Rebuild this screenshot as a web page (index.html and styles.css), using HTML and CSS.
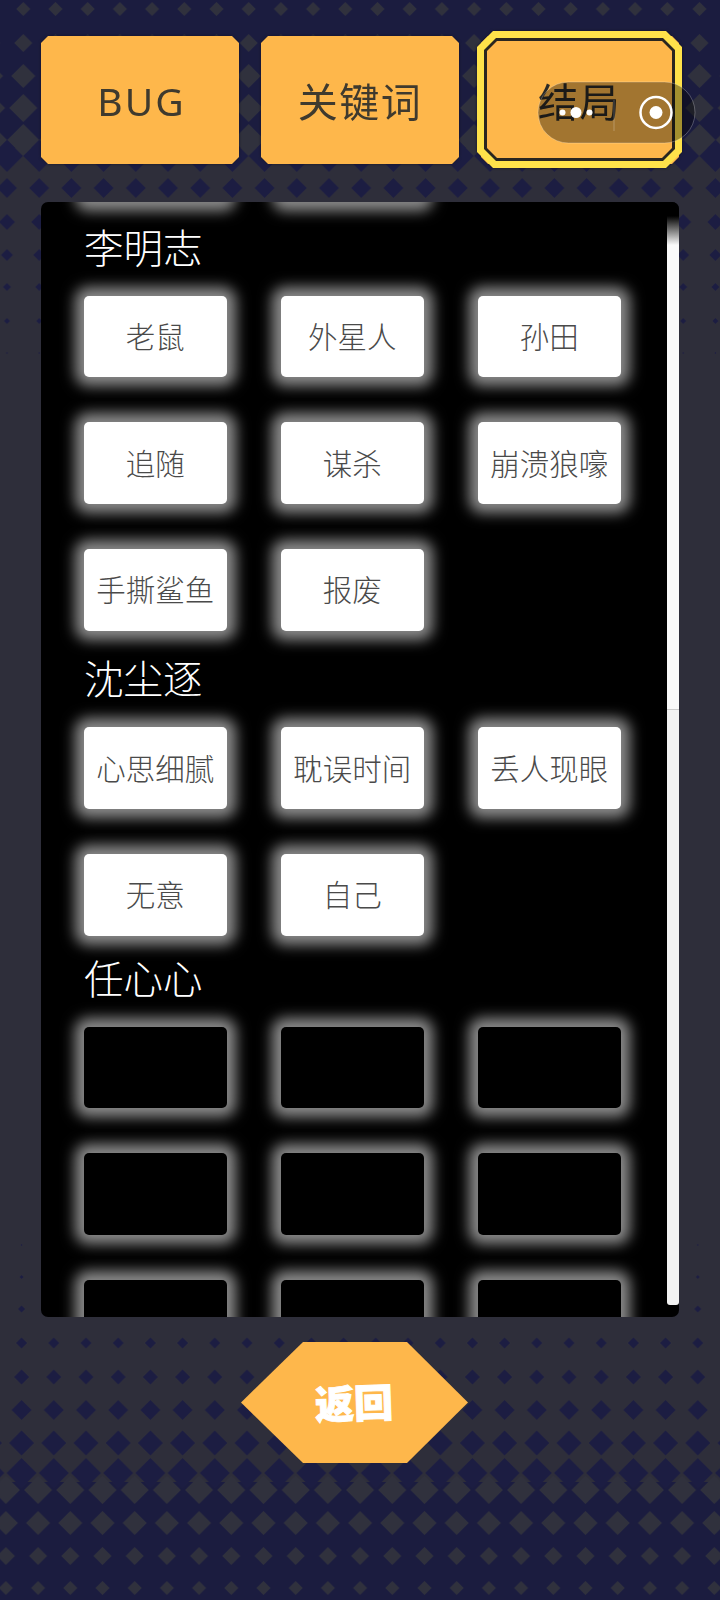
FILE: index.html

```html
<!DOCTYPE html>
<html lang="zh">
<head>
<meta charset="UTF-8" />
<meta name="viewport" content="width=device-width, initial-scale=1" />
<title>结局</title>
<link rel="stylesheet" href="styles.css">
</head>
<body>
  <!-- Fondo de rombos -->
  <svg class="bg" width="720" height="1600" viewBox="0 0 720 1600">
    <defs>
      <pattern id="t1" x="7.2" y="-8" width="32.2" height="34" patternUnits="userSpaceOnUse"><path class="lt" d="M16.1 10l7 7-7 7-7-7z"/></pattern>
      <pattern id="t2" x="7.2" y="26" width="32.2" height="34" patternUnits="userSpaceOnUse"><path class="lt" d="M16.1 8l9 9-9 9-9-9z"/></pattern>
      <pattern id="t3" x="7.2" y="59" width="32.2" height="34" patternUnits="userSpaceOnUse"><path class="lt" d="M16.1 5l12 12-12 12-12-12z"/></pattern>
      <pattern id="t4" x="7.2" y="91" width="32.2" height="34" patternUnits="userSpaceOnUse"><path class="lt" d="M16.1 3l14 14-14 14-14-14z"/></pattern>
      <pattern id="t5" x="7.2" y="123" width="32.2" height="34" patternUnits="userSpaceOnUse"><path class="lt" d="M16.1 1l16 16-16 16-16-16z"/></pattern>
      <pattern id="t6" x="-9.1" y="139" width="32.2" height="34" patternUnits="userSpaceOnUse"><path class="dk" d="M16.1 1l16 16-16 16-16-16z"/></pattern>
      <pattern id="t7" x="-9.1" y="171" width="32.2" height="34" patternUnits="userSpaceOnUse"><path class="dk" d="M16.1 7l10 10-10 10-10-10z"/></pattern>
      <pattern id="t8" x="-9.1" y="205" width="32.2" height="34" patternUnits="userSpaceOnUse"><path class="dk" d="M16.1 9l8 8-8 8-8-8z"/></pattern>
      <pattern id="t9" x="-9.1" y="238" width="32.2" height="34" patternUnits="userSpaceOnUse"><path class="dk" d="M16.1 11l6 6-6 6-6-6z"/></pattern>
      <pattern id="t10" x="-9.1" y="270" width="32.2" height="34" patternUnits="userSpaceOnUse"><path class="dk" d="M16.1 13l4 4-4 4-4-4z"/></pattern>
      <pattern id="t11" x="-9.1" y="304" width="32.2" height="34" patternUnits="userSpaceOnUse"><path class="dk" d="M16.1 14l3 3-3 3-3-3z"/></pattern>
      <pattern id="t12" x="-9.1" y="336" width="32.2" height="34" patternUnits="userSpaceOnUse"><path class="dk" d="M16.1 16l1 1-1 1-1-1z"/></pattern>

      <pattern id="b1" x="5.5" y="1228" width="32.2" height="34" patternUnits="userSpaceOnUse"><path class="dk" d="M16.1 16l1 1-1 1-1-1z"/></pattern>
      <pattern id="b2" x="5.5" y="1260" width="32.2" height="34" patternUnits="userSpaceOnUse"><path class="dk" d="M16.1 15l2 2-2 2-2-2z"/></pattern>
      <pattern id="b3" x="5.5" y="1292" width="32.2" height="34" patternUnits="userSpaceOnUse"><path class="dk" d="M16.1 13.5l3.5 3.5-3.5 3.5-3.5-3.5z"/></pattern>
      <pattern id="b4" x="5.5" y="1326" width="32.2" height="34" patternUnits="userSpaceOnUse"><path class="dk" d="M16.1 11.5l5.5 5.5-5.5 5.5-5.5-5.5z"/></pattern>
      <pattern id="b5" x="5.5" y="1360" width="32.2" height="34" patternUnits="userSpaceOnUse"><path class="dk" d="M16.1 9.5l7.5 7.5-7.5 7.5-7.5-7.5z"/></pattern>
      <pattern id="b6" x="5.5" y="1393" width="32.2" height="34" patternUnits="userSpaceOnUse"><path class="dk" d="M16.1 7l10 10-10 10-10-10z"/></pattern>
      <pattern id="b7" x="5.5" y="1426" width="32.2" height="34" patternUnits="userSpaceOnUse"><path class="dk" d="M16.1 4.5l12.5 12.5-12.5 12.5-12.5-12.5z"/></pattern>
      <pattern id="b8" x="5.5" y="1456" width="32.2" height="34" patternUnits="userSpaceOnUse"><path class="dk" d="M16.1 2l15 15-15 15-15-15z"/></pattern>
      <pattern id="b9" x="22" y="1473" width="32.2" height="34" patternUnits="userSpaceOnUse"><path class="lt" d="M16.1 3l14 14-14 14-14-14z"/></pattern>
      <pattern id="b10" x="22" y="1506" width="32.2" height="34" patternUnits="userSpaceOnUse"><path class="lt" d="M16.1 5l12 12-12 12-12-12z"/></pattern>
      <pattern id="b11" x="22" y="1539" width="32.2" height="34" patternUnits="userSpaceOnUse"><path class="lt" d="M16.1 8l9 9-9 9-9-9z"/></pattern>
      <pattern id="b12" x="22" y="1571" width="32.2" height="34" patternUnits="userSpaceOnUse"><path class="lt" d="M16.1 10l7 7-7 7-7-7z"/></pattern>
    </defs>
    <rect class="navy" width="720" height="148"/>
    <rect class="navy" y="1482" width="720" height="118"/>
    <rect y="-8" width="720" height="34" fill="url(#t1)"/>
    <rect y="26" width="720" height="34" fill="url(#t2)"/>
    <rect y="59" width="720" height="34" fill="url(#t3)"/>
    <rect y="91" width="720" height="34" fill="url(#t4)"/>
    <rect y="123" width="720" height="34" fill="url(#t5)"/>
    <rect y="139" width="720" height="34" fill="url(#t6)"/>
    <rect y="171" width="720" height="34" fill="url(#t7)"/>
    <rect y="205" width="720" height="34" fill="url(#t8)"/>
    <rect y="238" width="720" height="34" fill="url(#t9)"/>
    <rect y="270" width="720" height="34" fill="url(#t10)"/>
    <rect y="304" width="720" height="34" fill="url(#t11)"/>
    <rect y="336" width="720" height="34" fill="url(#t12)"/>
    <rect y="1228" width="720" height="34" fill="url(#b1)"/>
    <rect y="1260" width="720" height="34" fill="url(#b2)"/>
    <rect y="1292" width="720" height="34" fill="url(#b3)"/>
    <rect y="1326" width="720" height="34" fill="url(#b4)"/>
    <rect y="1360" width="720" height="34" fill="url(#b5)"/>
    <rect y="1393" width="720" height="34" fill="url(#b6)"/>
    <rect y="1426" width="720" height="34" fill="url(#b7)"/>
    <rect y="1456" width="720" height="34" fill="url(#b8)"/>
    <rect y="1473" width="720" height="34" fill="url(#b9)"/>
    <rect y="1506" width="720" height="34" fill="url(#b10)"/>
    <rect y="1539" width="720" height="34" fill="url(#b11)"/>
    <rect y="1571" width="720" height="34" fill="url(#b12)"/>
  </svg>

  <div class="page">
    <!-- Pestañas -->
    <div class="tabs">
      <div class="tab tab-latin">BUG</div>
      <div class="tab">关键词</div>
      <div class="tab tab-on"><i class="ring"></i><span class="tab-label">结局</span></div>
    </div>

    <!-- Lista de palabras -->
    <div class="panel">
      <div class="list">
        <div class="grid">
          <div class="cell"></div>
          <div class="cell"></div>
        </div>

        <h2 class="name name-a">李明志</h2>
        <div class="grid">
          <div class="cell">老鼠</div>
          <div class="cell">外星人</div>
          <div class="cell">孙田</div>
          <div class="cell">追随</div>
          <div class="cell">谋杀</div>
          <div class="cell">崩溃狼嚎</div>
          <div class="cell">手撕鲨鱼</div>
          <div class="cell">报废</div>
        </div>

        <h2 class="name name-b">沈尘逐</h2>
        <div class="grid">
          <div class="cell">心思细腻</div>
          <div class="cell">耽误时间</div>
          <div class="cell">丢人现眼</div>
          <div class="cell">无意</div>
          <div class="cell">自己</div>
        </div>

        <h2 class="name">任心心</h2>
        <div class="grid">
          <div class="cell cell-off"></div>
          <div class="cell cell-off"></div>
          <div class="cell cell-off"></div>
          <div class="cell cell-off"></div>
          <div class="cell cell-off"></div>
          <div class="cell cell-off"></div>
          <div class="cell cell-off"></div>
          <div class="cell cell-off"></div>
          <div class="cell cell-off"></div>
        </div>
      </div>
      <div class="scrollbar"></div>
    </div>

    <button class="back"><span class="back-label">返回</span></button>
  </div>

  <!-- Cápsula del mini programa -->
  <svg class="capsule" width="159" height="63" viewBox="0 0 159 63">
    <rect x="1" y="1" width="157" height="61" rx="30.5" fill="#000" fill-opacity=".36" stroke="#fff" stroke-opacity=".25"/>
    <circle cx="25.5" cy="31.5" r="3" fill="#fff"/>
    <circle cx="39" cy="31.5" r="5.5" fill="#fff"/>
    <circle cx="52.5" cy="31.5" r="3" fill="#fff"/>
    <path d="M77 19v31" stroke="#fff" stroke-opacity=".25"/>
    <circle cx="119" cy="31.5" r="15.5" fill="none" stroke="#fff" stroke-width="2.5"/>
    <circle cx="119" cy="31.5" r="6.5" fill="#fff"/>
  </svg>
</body>
</html>
```

FILE: styles.css

```css
html, body {
  margin: 0;
  padding: 0;
  width: 720px;
  height: 1600px;
  overflow: hidden;
  background: #2e2e3a;
  font-family: "Noto Sans", "Noto Sans CJK SC", sans-serif;
}
.bg {
  position: absolute;
  top: 0;
  left: 0;
}
.navy { fill: #1b1c3f; }
.lt { fill: #30313d; }
.dk { fill: #1c1d42; }

.page {
  position: relative;
  padding: 36px 41px 0;
}

/* Tabs */
.tabs {
  display: flex;
  gap: 22px;
}
.tab {
  position: relative;
  width: 198px;
  height: 128px;
  display: flex;
  align-items: center;
  justify-content: center;
  font-size: 40px;
  letter-spacing: 1.5px;
  color: #3f3a2e;
  filter: drop-shadow(0 0 1.5px #14142a);
}
.tab::before {
  content: "";
  position: absolute;
  inset: 0;
  z-index: -1;
  background: #feb74b;
  clip-path: polygon(7px 0, calc(100% - 7px) 0, 100% 7px, 100% calc(100% - 7px), calc(100% - 7px) 100%, 7px 100%, 0 calc(100% - 7px), 0 7px);
}
.tab-latin {
  letter-spacing: 2px;
  padding-left: 3px;
  box-sizing: border-box;
  font-size: 39px;
}
.tab-on {
  color: #2b2a26;
}
.tab-label {
  position: relative;
  margin-left: -1px;
}
.ring {
  position: absolute;
  top: -5px;
  left: -4px;
  right: -3px;
  bottom: -4px;
  background: #ffe24a;
  clip-path: polygon(16px 0, calc(100% - 16px) 0, 100% 16px, 100% calc(100% - 16px), calc(100% - 16px) 100%, 16px 100%, 0 calc(100% - 16px), 0 16px);
}
.ring::before, .ring::after {
  content: "";
  position: absolute;
}
.ring::before {
  inset: 7px;
  background: #2a2620;
  clip-path: polygon(12px 0, calc(100% - 12px) 0, 100% 12px, 100% calc(100% - 12px), calc(100% - 12px) 100%, 12px 100%, 0 calc(100% - 12px), 0 12px);
}
.ring::after {
  inset: 10px;
  background: #feb74b;
  clip-path: polygon(10px 0, calc(100% - 10px) 0, 100% 10px, 100% calc(100% - 10px), calc(100% - 10px) 100%, 10px 100%, 0 calc(100% - 10px), 0 10px);
}

/* Panel */
.panel {
  position: relative;
  width: 638px;
  height: 1115px;
  margin-top: 38px;
  background: #000;
  border-radius: 7px;
  overflow: hidden;
}
.list {
  margin-top: -82px;
  padding-left: 43px;
}
.grid {
  display: grid;
  grid-template-columns: repeat(3, 142.5px);
  grid-auto-rows: 81.67px;
  column-gap: 54.5px;
  row-gap: 45px;
}
.cell {
  display: flex;
  align-items: center;
  justify-content: center;
  padding-bottom: 2px;
  box-sizing: border-box;
  background: #fff;
  border-radius: 5px;
  box-shadow: 0 0 14px 9px rgba(255, 255, 255, 0.55);
  font-size: 29.5px;
  font-weight: 300;
  color: #4a4a4a;
}
.cell-off {
  background: #000;
}
.name {
  height: 91px;
  padding-bottom: 8px;
  box-sizing: border-box;
  margin: 0;
  display: flex;
  align-items: center;
  font-size: 39.5px;
  font-weight: 300;
  color: #fff;
}
.name-a { height: 94px; padding-bottom: 6px; }
.name-b { height: 96.67px; padding-bottom: 4px; }
.scrollbar {
  position: absolute;
  top: 0;
  right: 0;
  width: 12px;
  height: 1103px;
  border-radius: 0 0 3px 3px;
  background: linear-gradient(to bottom, #000 14px, #fafafa 43px, #fafafa 507px, #ccc 507px, #ccc 508px, #f2f2f2 508px);
}

/* Volver */
.back {
  display: block;
  width: 227px;
  height: 121px;
  margin: 25px 0 0 200px;
  padding: 0 0 3px;
  border: none;
  background: #feb74b;
  clip-path: polygon(62px 0, 166px 0, 100% 50%, 166px 100%, 62px 100%, 0 50%);
  font-family: "Noto Sans CJK SC", sans-serif;
  font-size: 39px;
  font-weight: 900;
  color: #fff;
}
.back-label {
  display: inline-block;
  transform: rotate(-2deg);
  -webkit-text-stroke: 1px #fff;
}

.capsule {
  position: absolute;
  top: 81px;
  left: 537px;
}
```
